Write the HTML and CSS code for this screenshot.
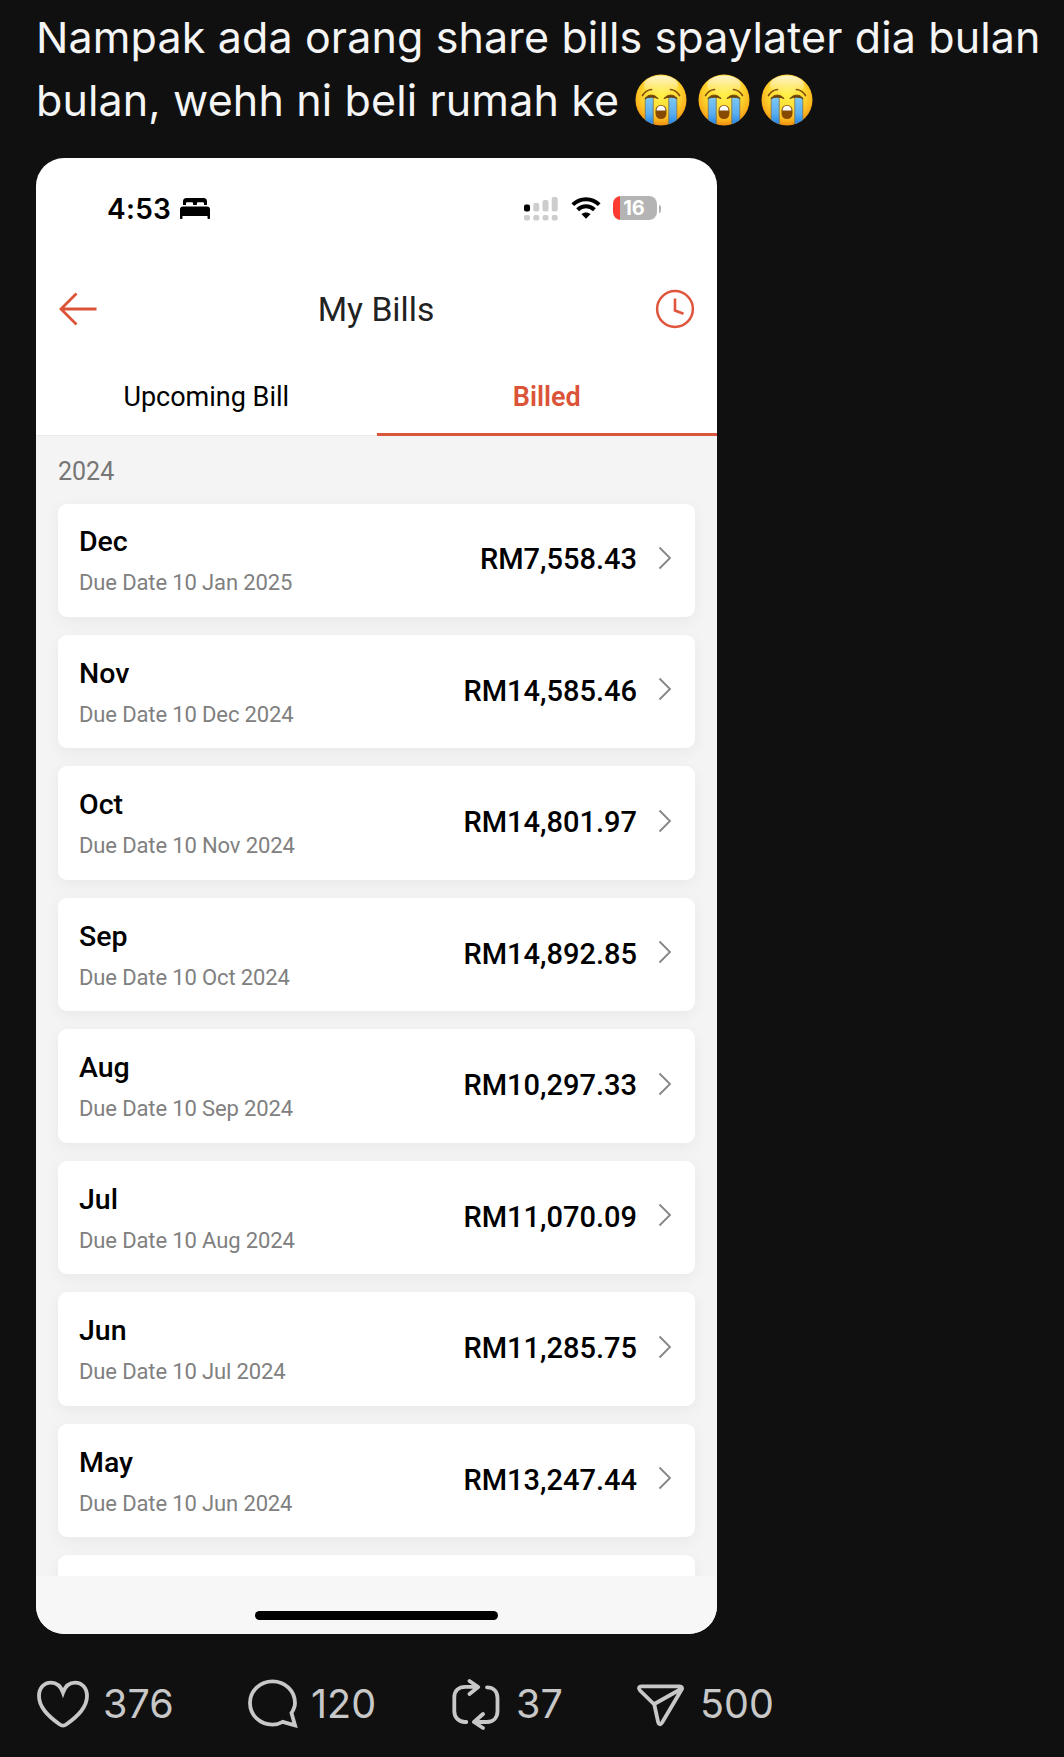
FILE: index.html
```html
<!DOCTYPE html>
<html lang="ms">
<head>
  <meta charset="UTF-8" />
  <meta name="viewport" content="width=device-width, initial-scale=1.0"/>
  <title>My Bills</title>
  <link rel="stylesheet" href="styles.css">
</head>
<body>
  <!-- Shared icons -->
  <svg class="sprite" width="0" height="0">
    <defs>
      <radialGradient id="face" cx="50%" cy="38%" r="62%">
        <stop offset="0" stop-color="#fff04a"/>
        <stop offset="0.55" stop-color="#fedb33"/>
        <stop offset="0.85" stop-color="#fbb01c"/>
        <stop offset="1" stop-color="#ee8d10"/>
      </radialGradient>
      <linearGradient id="shine" x1="0" y1="0" x2="0" y2="1">
        <stop offset="0" stop-color="#fff" stop-opacity="0.75"/>
        <stop offset="1" stop-color="#fff" stop-opacity="0"/>
      </linearGradient>
      <linearGradient id="tear" x1="0" y1="0" x2="0" y2="1">
        <stop offset="0" stop-color="#7cc8f4"/>
        <stop offset="0.55" stop-color="#5cb0f0"/>
        <stop offset="1" stop-color="#1b7fe6"/>
      </linearGradient>
      <clipPath id="round"><circle cx="26" cy="26" r="25.5"/></clipPath>
    </defs>
    <symbol id="sob" viewBox="0 0 52 52">
      <circle cx="26" cy="26" r="25.5" fill="url(#face)"/>
      <ellipse cx="26" cy="11" rx="17" ry="9.5" fill="url(#shine)"/>
      <g clip-path="url(#round)">
        <path d="M10 23h8.5v29H10z" fill="url(#tear)"/>
        <path d="M33.5 23H42v29h-8.5z" fill="url(#tear)"/>
        <path d="M18.2 24v28M33.8 24v28M10.2 24v24M41.8 24v24" stroke="#8b7442" stroke-width="0.8" fill="none"/>
      </g>
      <path d="M7.500 21.500c2-3.500 5-5.500 9-6M44.500 21.500c-2-3.500-5-5.500-9-6" stroke="#86500a" stroke-width="1.700" stroke-linecap="round" fill="none"/>
      <path d="M10 24.500c3-4.500 9.500-4.500 13 0-4-1.800-9-1.800-13 0zM29 24.500c3.500-4.500 10-4.500 13 0-4-1.800-9-1.800-13 0z" fill="#6e4206" stroke="#6e4206" stroke-width="1" stroke-linejoin="round"/>
      <rect x="20.5" y="31" width="11" height="14" rx="5.4" fill="#864a05"/>
      <path d="M21.500 36.500c0-3 2-4.700 4.500-4.700s4.500 1.700 4.500 4.700z" fill="#fff"/>
    </symbol>
    <symbol id="chevron" viewBox="0 0 14 24">
      <path d="M1.500 1.500L12 12 1.500 22.500" fill="none" stroke="#858585" stroke-width="1.800"/>
    </symbol>
  </svg>

  <main class="post">
    <p class="post-text">Nampak ada orang share bills spaylater dia bulan<br>bulan, wehh ni beli rumah ke <span class="emojis"><svg class="emoji"><use href="#sob"/></svg><svg class="emoji"><use href="#sob"/></svg><svg class="emoji"><use href="#sob"/></svg></span></p>

    <!-- Phone screen -->
    <section class="phone">
      <div class="status-bar">
        <div class="status-left">
          <span class="time">4:53</span>
          <svg class="bed" viewBox="0 0 30 21">
            <path d="M3 7V3.500C3 1.300 4.200 0 6.500 0h17C25.800 0 27 1.300 27 3.500V7h-3V5.500c0-.9-.5-1.300-1.300-1.300h-4.500c-.8 0-1.300.4-1.300 1.300V7h-3.800V5.500c0-.9-.5-1.300-1.300-1.300H7.300C6.500 4.200 6 4.600 6 5.500V7z"/>
            <path d="M3 8.500h24c2 0 3 1.200 3 3V20c0 .6-.4 1-1 1h-.5c-.6 0-1-.4-1-1v-2h-25v2c0 .6-.4 1-1 1H1c-.6 0-1-.4-1-1v-8.500c0-1.800 1-3 3-3z"/>
          </svg>
        </div>
        <div class="status-right">
          <svg class="signal" viewBox="0 0 34 24">
            <rect x="0" y="7.500" width="6" height="7" rx="2" fill="#000"/>
            <g fill="#cdcdcd">
              <rect x="9.300" y="6" width="6" height="8.500" rx="2"/>
              <rect x="18.500" y="3" width="6" height="11.500" rx="2"/>
              <rect x="27.700" y="0" width="6" height="14.500" rx="2"/>
              <rect x="0" y="18" width="6" height="5.500" rx="2"/>
              <rect x="9.300" y="18" width="6" height="5.500" rx="2"/>
              <rect x="18.500" y="18" width="6" height="5.500" rx="2"/>
              <rect x="27.700" y="18" width="6" height="5.500" rx="2"/>
            </g>
          </svg>
          <svg class="wifi" viewBox="0 0 30 22">
            <path d="M1.800 7.600C9.200.3 20.800.3 28.200 7.600M6.600 12.700c4.900-4.600 11.900-4.600 16.800 0" fill="none" stroke="#000" stroke-width="4"/>
            <path d="M15 21.700l-4.600-4.600c2.800-2.300 6.400-2.300 9.200 0z"/>
          </svg>
          <div class="battery"><span class="battery-level">16</span></div>
          <span class="battery-nub"></span>
        </div>
      </div>

      <header class="nav">
        <svg class="back" viewBox="0 0 38 34">
          <path d="M17.500 1.500L2 17l15.500 15.500M2 17h35.500" fill="none" stroke="#db5438" stroke-width="2.800"/>
        </svg>
        <h1 class="title">My Bills</h1>
        <svg class="clock" viewBox="0 0 40 40">
          <circle cx="20" cy="20" r="17.900" fill="none" stroke="#e0563c" stroke-width="2.500"/>
          <path d="M20 9.500v12l8.500 3.300" fill="none" stroke="#e0563c" stroke-width="2.600"/>
        </svg>
      </header>

      <nav class="tabs">
        <div class="tab">Upcoming Bill</div>
        <div class="tab active">Billed</div>
      </nav>

      <div class="bills">
        <h2 class="year">2024</h2>
        <div class="bill">
          <div><div class="month">Dec</div><div class="due">Due Date 10 Jan 2025</div></div>
          <div class="amount">RM7,558.43</div>
          <svg class="chevron"><use href="#chevron"/></svg>
        </div>
        <div class="bill">
          <div><div class="month">Nov</div><div class="due">Due Date 10 Dec 2024</div></div>
          <div class="amount">RM14,585.46</div>
          <svg class="chevron"><use href="#chevron"/></svg>
        </div>
        <div class="bill">
          <div><div class="month">Oct</div><div class="due">Due Date 10 Nov 2024</div></div>
          <div class="amount">RM14,801.97</div>
          <svg class="chevron"><use href="#chevron"/></svg>
        </div>
        <div class="bill">
          <div><div class="month">Sep</div><div class="due">Due Date 10 Oct 2024</div></div>
          <div class="amount">RM14,892.85</div>
          <svg class="chevron"><use href="#chevron"/></svg>
        </div>
        <div class="bill">
          <div><div class="month">Aug</div><div class="due">Due Date 10 Sep 2024</div></div>
          <div class="amount">RM10,297.33</div>
          <svg class="chevron"><use href="#chevron"/></svg>
        </div>
        <div class="bill">
          <div><div class="month">Jul</div><div class="due">Due Date 10 Aug 2024</div></div>
          <div class="amount">RM11,070.09</div>
          <svg class="chevron"><use href="#chevron"/></svg>
        </div>
        <div class="bill">
          <div><div class="month">Jun</div><div class="due">Due Date 10 Jul 2024</div></div>
          <div class="amount">RM11,285.75</div>
          <svg class="chevron"><use href="#chevron"/></svg>
        </div>
        <div class="bill">
          <div><div class="month">May</div><div class="due">Due Date 10 Jun 2024</div></div>
          <div class="amount">RM13,247.44</div>
          <svg class="chevron"><use href="#chevron"/></svg>
        </div>
        <div class="bill"></div>
      </div>

      <div class="home-area"><div class="home-bar"></div></div>
    </section>

    <!-- Like, reply, repost, share -->
    <footer class="actions">
      <div class="action like">
        <svg class="icon" viewBox="0 0 54 52">
          <path d="M27 14.500C24.500 7.500 20 4.600 15 4.600 8 4.600 3 10 3 18c0 11 8.500 19.500 20.500 28.300 2.600 1.900 4.400 1.900 7 0C42.500 37.500 51 29 51 18c0-8-5-13.400-12-13.400-5 0-9.500 2.900-12 9.900z"/>
        </svg>
        <span>376</span>
      </div>
      <div class="action">
        <svg class="icon" viewBox="0 0 54 52">
          <path d="M48 47.300l-12.300-3.400C32.400 45.700 29.100 46.700 25.500 46.700 13 46.700 3 37.300 3 25S13 3.300 25.500 3.300 48 12.700 48 25c0 4-1.600 7-3.500 10z"/>
        </svg>
        <span>120</span>
      </div>
      <div class="action">
        <svg class="icon round" viewBox="0 0 54 52">
          <path d="M14.300 44H13C6.500 44 2.300 39.500 2.300 33V19.500c0-6.500 4.200-10.700 11-10.700H26M17.500 3l8.700 6-8.700 7M35 9.300c6.500 0 10.500 4.200 10.500 10.700v13c0 6.500-4 11-10.700 11H22M31 36l-9 8 9 6"/>
        </svg>
        <span>37</span>
      </div>
      <div class="action">
        <svg class="icon round" viewBox="0 0 54 52">
          <path d="M5.500 8.300H43.500c2.400 0 3.300 1.600 2 3.500L26 44.800c-1.400 2.200-3.300 1.800-3.800-.5L18.300 26.500 4 12.500C2 10.500 2.900 8.300 5.500 8.300zM18.300 26L45 11"/>
        </svg>
        <span>500</span>
      </div>
    </footer>
  </main>
</body>
</html>
```
FILE: styles.css
```css
body {
  margin: 0;
  background: #101010;
  font-family: Inter, "Liberation Sans", sans-serif;
}

.sprite {
  display: block;
}

.post {
  box-sizing: border-box;
  height: 1757px;
  padding: 6px 0 0 36px;
  overflow: hidden;
}

.post-text {
  margin: 0 0 26px;
  height: 126px;
  color: #f5f5f5;
  font-size: 43px;
  line-height: 63px;
  letter-spacing: 0.13px;
  white-space: nowrap;
}

.emojis {
  margin-left: 4px;
}

.emoji {
  width: 52px;
  height: 52px;
  margin: -10px 11px 0 0;
  vertical-align: -10px;
}

/* Phone screen */
.phone {
  display: flex;
  flex-direction: column;
  width: 681px;
  height: 1476px;
  border-radius: 28px;
  overflow: hidden;
  background: #fff;
  font-family: Roboto, "Liberation Sans", sans-serif;
}

.status-bar {
  display: flex;
  justify-content: space-between;
  align-items: center;
  height: 101px;
  padding: 0 56px 0 71px;
}

.status-left,
.status-right {
  display: flex;
  align-items: center;
}

.time {
  width: 73px;
  font: 600 28px/32px Inter, sans-serif;
  letter-spacing: 0.3px;
}

.bed {
  width: 30px;
  height: 21px;
}

.signal {
  width: 34px;
  height: 24px;
}

.wifi {
  width: 30px;
  height: 22px;
  margin: -2px 12px 0 13px;
}

.battery {
  box-sizing: border-box;
  width: 44px;
  height: 24px;
  margin-top: -1px;
  padding-right: 2px;
  border-radius: 8px;
  background: linear-gradient(90deg, #fd3b30 7px, #b4b4b4 7px);
  color: #fff;
  font: 700 20px/24px Inter, sans-serif;
  text-align: center;
}

.battery-nub {
  width: 2px;
  height: 8px;
  margin-left: 2px;
  border-radius: 0 3px 3px 0;
  background: #b4b4b4;
}

.nav {
  display: flex;
  justify-content: space-between;
  align-items: center;
  height: 100px;
  padding: 0 22px 0 23px;
}

.back {
  width: 38px;
  height: 34px;
}

.title {
  margin: 0;
  color: #222;
  font-size: 33.7px;
  font-weight: 400;
}

.clock {
  width: 40px;
  height: 40px;
}

.tabs {
  display: flex;
  height: 76px;
  border-bottom: 1px solid #e9e9e9;
}

.tab {
  box-sizing: border-box;
  flex: 1;
  height: 77px;
  border-bottom: 3px solid transparent;
  font-size: 27px;
  line-height: 77px;
  text-align: center;
}

.tab.active {
  border-bottom-color: #d9583d;
  color: #db5438;
  font-weight: 600;
}

.bills {
  flex: 1;
  padding: 0 22px;
  overflow: hidden;
  background: #f4f4f4;
}

.year {
  margin: 0;
  height: 67.5px;
  color: #777;
  font-size: 25px;
  font-weight: 400;
  line-height: 72px;
}

.bill {
  box-sizing: border-box;
  display: flex;
  align-items: center;
  height: 113.3px;
  margin-bottom: 18.2px;
  padding: 0 23px 0 21px;
  border-radius: 9px;
  background: #fff;
  box-shadow: 0 4px 16px rgba(0, 0, 0, 0.05);
}

.month {
  padding-top: 5px;
  font-size: 28.5px;
  font-weight: 500;
  line-height: 40px;
}

.due {
  color: #808080;
  font-size: 22px;
  line-height: 41px;
  letter-spacing: -0.13px;
}

.amount {
  margin-left: auto;
  margin-bottom: 2px;
  font-size: 29px;
  font-weight: 500;
}

.chevron {
  width: 14px;
  height: 24px;
  margin: 0 0 5px 21px;
}

.home-area {
  display: flex;
  justify-content: center;
  height: 58px;
  background: #f7f7f7;
}

.home-bar {
  width: 243px;
  height: 9px;
  margin-top: 35px;
  border-radius: 5px;
  background: #000;
}

/* Action row */
.actions {
  display: grid;
  grid-template-columns: 211px 205px 184px auto;
  margin-top: 43px;
}

.action {
  display: flex;
  align-items: center;
  gap: 10px;
  color: #c8c8c8;
  font-size: 39.5px;
  line-height: 54px;
}

.action.like {
  gap: 13px;
}

.icon {
  width: 54px;
  height: 52px;
  margin-top: -1px;
  fill: none;
  stroke: #c8c8c8;
  stroke-width: 3.8;
  stroke-linejoin: miter;
}

.icon.round {
  stroke-linecap: round;
  stroke-linejoin: round;
}
```
